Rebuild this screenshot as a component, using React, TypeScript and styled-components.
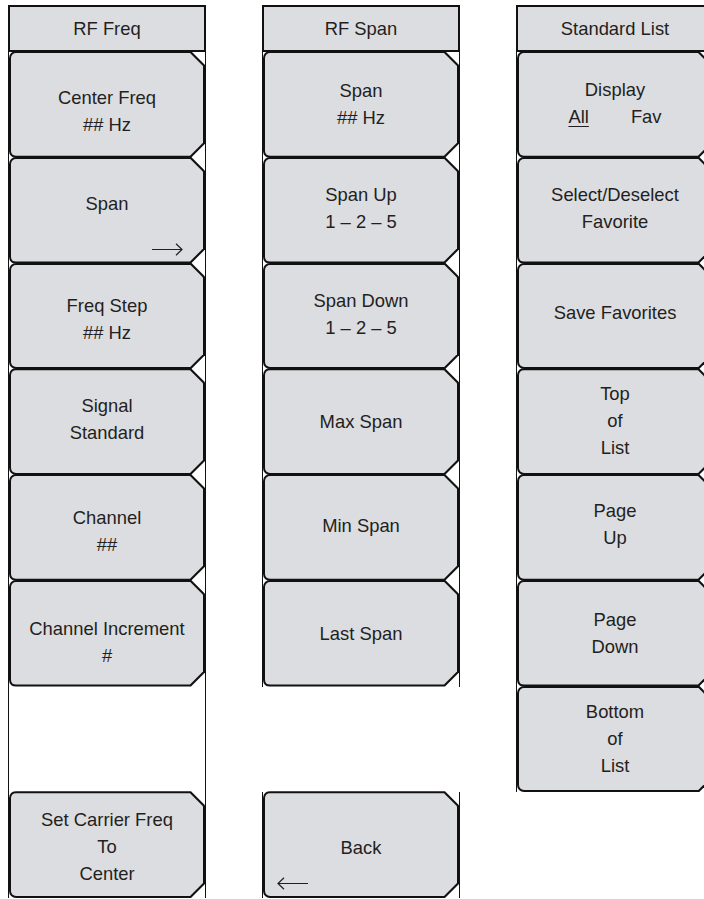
import React from 'react'
import styled, { createGlobalStyle } from 'styled-components'

const GlobalStyle = createGlobalStyle`
  html, body {
    margin: 0;
    background: #fff;
    overflow: hidden;
  }
  body {
    font-family: "Liberation Sans", Arial, sans-serif;
    color: #231f20;
  }
`

const KEY_H = 105.75
const CUT = 14

const Page = styled.div`
  display: flex;
  gap: 56px;
  padding: 5px 0 0 8px;
  width: max-content;
`

const Column = styled.div`
  width: 198px;
  height: 893px;
  display: flex;
  flex-direction: column;
  justify-content: space-between;
`

const Frame = styled.div`
  display: flex;
  flex-direction: column;
  border-left: 1px solid #111;
  border-right: 1px solid #111;
`

const Title = styled.div`
  box-sizing: border-box;
  height: 47px;
  margin: 0 -1px;
  border: 2px solid #111;
  background: #dcdde0;
  display: flex;
  align-items: center;
  justify-content: center;
  font-size: 18.4px;
`

const Key = styled.div`
  box-sizing: border-box;
  height: ${KEY_H + 1}px;
  margin-top: -1px;
  padding: 2px;
  background: #111;
  border-radius: 7px 0 0 7px;
  clip-path: polygon(0 0, calc(100% - ${CUT}px) 0, 100% ${CUT}px, 100% calc(100% - ${CUT}px), calc(100% - ${CUT}px) 100%, 0 100%);
`

// $offset moves the label block down (positive) or up (negative)
const Face = styled.div<{ $offset: number }>`
  position: relative;
  height: 100%;
  background: #dcdde0;
  border-radius: 5px 0 0 5px;
  clip-path: polygon(0 0, calc(100% - ${CUT - 1}px) 0, 100% ${CUT - 1}px, 100% calc(100% - ${CUT - 1}px), calc(100% - ${CUT - 1}px) 100%, 0 100%);
  display: flex;
  flex-direction: column;
  align-items: center;
  justify-content: center;
  box-sizing: border-box;
  padding-top: ${p => Math.max(0, p.$offset) * 2}px;
  padding-bottom: ${p => Math.max(0, -p.$offset) * 2}px;
  font-size: 18.4px;
  line-height: 27px;
  text-align: center;
`

const Spacer = styled.div`
  height: ${KEY_H}px;
`

const Choice = styled.div`
  display: flex;
  gap: 42px;
  u {
    text-decoration-thickness: 1px;
    text-underline-offset: 3px;
  }
`

const ArrowSlot = styled.div<{ $side: 'left' | 'right' }>`
  position: absolute;
  bottom: 6px;
  ${p => (p.$side === 'right' ? 'right: 20px;' : 'left: 12px;')}
  display: flex;
`

const Arrow = ({ dir }: { dir: 'left' | 'right' }) => (
  <svg width="31" height="13" viewBox="0 0 31 13" fill="none" stroke="#231f20" strokeWidth="1.2">
    {dir === 'right' ? (
      <path d="M0 6.5H30M24 0.8L30 6.5L24 12.2" />
    ) : (
      <path d="M31 6.5H1M7 0.8L1 6.5L7 12.2" />
    )}
  </svg>
)

type KeyDef = {
  lines: React.ReactNode[]
  arrow?: 'left' | 'right'
  offset?: number
}

const SoftKey = ({ lines, arrow, offset = 0 }: KeyDef) => (
  <Key>
    <Face $offset={offset}>
      {lines.map((l, i) => (
        <div key={i}>{l}</div>
      ))}
      {arrow && (
        <ArrowSlot $side={arrow}>
          <Arrow dir={arrow} />
        </ArrowSlot>
      )}
    </Face>
  </Key>
)

const rfFreq: KeyDef[] = [
  { lines: ['Center Freq', '## Hz'], offset: 7 },
  { lines: ['Span'], arrow: 'right', offset: -7 },
  { lines: ['Freq Step', '## Hz'], offset: 3 },
  { lines: ['Signal', 'Standard'], offset: -3 },
  { lines: ['Channel', '##'], offset: 4 },
  { lines: ['Channel Increment', '#'], offset: 9 },
]

const rfSpan: KeyDef[] = [
  { lines: ['Span', '## Hz'] },
  { lines: ['Span Up', '1 – 2 – 5'], offset: -2 },
  { lines: ['Span Down', '1 – 2 – 5'], offset: -2 },
  { lines: ['Max Span'] },
  { lines: ['Min Span'], offset: -2 },
  { lines: ['Last Span'] },
]

const stdList: KeyDef[] = [
  {
    lines: [
      'Display',
      <Choice>
        <u>All</u>
        <span>Fav</span>
      </Choice>,
    ],
    offset: -1,
  },
  { lines: ['Select/Deselect', 'Favorite'], offset: -2 },
  { lines: ['Save Favorites'], offset: -3 },
  { lines: ['Top', 'of', 'List'], offset: -1 },
  { lines: ['Page', 'Up'], offset: -3 },
  { lines: ['Page', 'Down'] },
  { lines: ['Bottom', 'of', 'List'] },
]

export default function App() {
  return (
    <>
      <GlobalStyle />
      <Page>
        <Column>
          <Frame>
            <Title>RF Freq</Title>
            {rfFreq.map((k, i) => (
              <SoftKey key={i} {...k} />
            ))}
            <Spacer />
            <SoftKey lines={['Set Carrier Freq', 'To', 'Center']} offset={2} />
          </Frame>
        </Column>

        <Column>
          <Frame>
            <Title>RF Span</Title>
            {rfSpan.map((k, i) => (
              <SoftKey key={i} {...k} />
            ))}
          </Frame>
          <Frame>
            <SoftKey lines={['Back']} arrow="left" offset={3} />
          </Frame>
        </Column>

        <Column>
          <Frame>
            <Title>Standard List</Title>
            {stdList.map((k, i) => (
              <SoftKey key={i} {...k} />
            ))}
          </Frame>
        </Column>
      </Page>
    </>
  )
}
